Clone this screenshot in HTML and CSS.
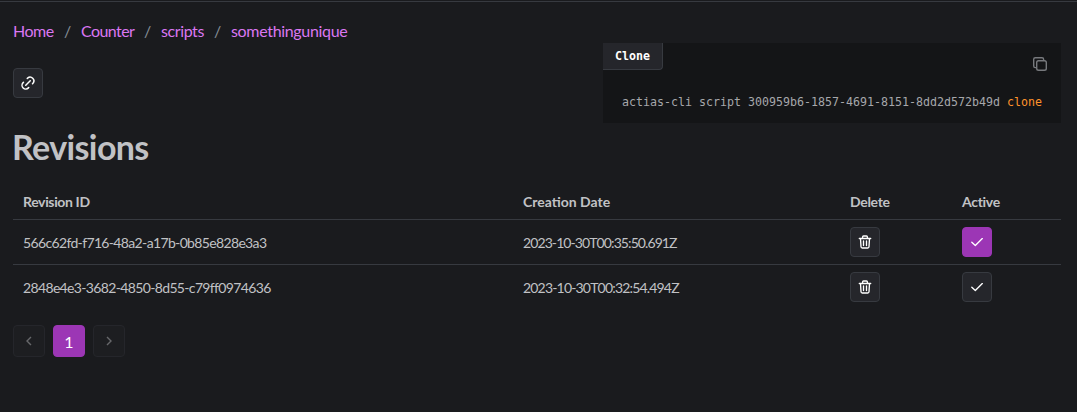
FILE: index.html
```html
<!DOCTYPE html>
<html lang="en">
<head>
<meta charset="utf-8">
<title>Revisions</title>
<link rel="stylesheet" href="styles.css">
</head>
<body>
<svg class="sprite" aria-hidden="true">
  <symbol id="trash" viewBox="0 0 16 16"><path d="M2.300 4.500h11.400M5.600 4.300V2.900Q5.600 2 6.500 2h3q.9 0 .9.900v1.400M3.500 4.500l.5 8.300q.1 1.200 1.200 1.200h5.600q1.100 0 1.200-1.200l.5-8.300M6.500 6.800v4.700M9.500 6.800v4.700"/></symbol>
  <symbol id="check" viewBox="0 0 16 16"><path d="M2.800 8.300 6.300 11.600 13.300 4.600"/></symbol>
</svg>
<main class="page">
  <header class="top">
    <div>
      <nav class="breadcrumbs">
        <a class="crumb-home">Home</a><span>/</span><a class="crumb-counter">Counter</a><span>/</span><a class="crumb-scripts">scripts</a><span>/</span><a class="crumb-name">somethingunique</a>
      </nav>
      <button class="action link-action" aria-label="Copy link">
        <svg viewBox="0 0 24 24"><path d="m9 15 6-6M11 6l.5-.55a5 5 0 0 1 7.050 7.050L18 13M13 18l-.4.530a5 5 0 0 1-7.100-7.050L6 11"/></svg>
      </button>
    </div>
    <section class="code">
      <div class="tab">Clone</div>
      <svg class="copy" viewBox="0 0 16 16"><rect x="4.700" y="4.700" width="9.600" height="9.600" rx="1.800"/><path d="M11.600 4.500V3.300q0-1.600-1.600-1.600H3.300Q1.700 1.700 1.700 3.300V10q0 1.600 1.600 1.600h1.200"/></svg>
      <pre>actias-cli script 300959b6-1857-4691-8151-8dd2d572b49d <b>clone</b></pre>
    </section>
  </header>
  <h1>Revisions</h1>
  <div class="table">
    <div class="row head"><span class="h-id">Revision ID</span><span class="h-date">Creation Date</span><span class="h-action">Delete</span><span class="h-action">Active</span></div>
    <div class="row">
      <span class="id">566c62fd-f716-48a2-a17b-0b85e828e3a3</span><span class="date date-tight">2023-10-30T00:35:50.691Z</span>
      <button class="action" aria-label="Delete"><svg><use href="#trash"/></svg></button>
      <button class="action filled" aria-label="Active"><svg><use href="#check"/></svg></button>
    </div>
    <div class="row">
      <span class="id">2848e4e3-3682-4850-8d55-c79ff0974636</span><span class="date">2023-10-30T00:32:54.494Z</span>
      <button class="action" aria-label="Delete"><svg><use href="#trash"/></svg></button>
      <button class="action" aria-label="Set active"><svg><use href="#check"/></svg></button>
    </div>
  </div>
  <nav class="pagination">
    <button class="pager" disabled aria-label="Previous"><svg viewBox="0 0 16 16"><path d="M10 4 6 8l4 4"/></svg></button>
    <button class="pager current" aria-label="Page 1">1</button>
    <button class="pager" disabled aria-label="Next"><svg viewBox="0 0 16 16"><path d="M6 4l4 4-4 4"/></svg></button>
  </nav>
</main>
</body>
</html>
```
FILE: styles.css
```css
* { box-sizing: border-box; }
body {
  margin: 0;
  padding-top: 1px;
  height: 412px;
  overflow: hidden;
  background: #1a1b1e;
  color: #c1c2c5;
  font: 14px/22px Lato, sans-serif;
}
.sprite { position: absolute; width: 0; height: 0; }
.page { border-top: 1px solid #373a40; padding: 18px 16px 0 13px; }
.top { display: flex; justify-content: space-between; height: 103px; }
.breadcrumbs { display: flex; height: 25px; font-size: 16px; line-height: 22px; white-space: nowrap; }
.breadcrumbs a { color: #da77f2; }
.breadcrumbs span { width: 27px; text-align: center; color: #868e96; }
.crumb-home { width: 41px; letter-spacing: -0.5px; }
.crumb-counter { width: 53px; letter-spacing: -0.57px; }
.crumb-scripts { width: 43px; letter-spacing: -0.4px; }
.crumb-name { width: 117px; letter-spacing: -0.33px; }
.action {
  display: flex;
  align-items: center;
  justify-content: center;
  width: 30px;
  height: 30px;
  padding: 0;
  border: 1px solid #373a40;
  border-radius: 4px;
  background: #25262b;
  color: #fff;
}
.link-action { margin-top: 23px; }
.action svg { width: 16px; height: 16px; fill: none; stroke: currentColor; stroke-width: 1.35; stroke-linecap: round; stroke-linejoin: round; }
.link-action svg { width: 18px; height: 18px; stroke-width: 2; }
.filled { background: #9c36b5; border-color: #9c36b5; }
.code { position: relative; width: 458px; height: 80px; margin-top: 23px; background: #141517; font-family: "DejaVu Sans Mono", monospace; font-size: 11.63px; }
.tab { width: 60px; height: 27px; padding-left: 12px; line-height: 26px; border: solid #373a40; border-width: 0 1px 1px 0; border-bottom-right-radius: 4px; background: #25262b; color: #fff; font-weight: 700; }
.copy { position: absolute; right: 13px; top: 13px; width: 16px; height: 16px; fill: none; stroke: #77797d; stroke-width: 1.4; }
.code pre { margin: 22px 0 0 19px; font: inherit; line-height: 20px; color: #a6a7ab; }
.code b { color: #ff922b; font-weight: 400; }
h1 { margin: 5px 0 0; height: 57px; font-size: 34px; line-height: 38px; font-weight: 700; letter-spacing: -0.62px; text-indent: -1px; }
.row { display: grid; grid-template-columns: 500px 327px 112px 1fr; align-items: center; height: 45px; padding-left: 10px; white-space: nowrap; border-bottom: 1px solid #373a40; }
.row:last-child { height: 44px; border: 0; }
.id, .date { padding-top: 2px; }
.id { letter-spacing: -0.65px; }
.date { letter-spacing: -0.82px; }
.date-tight { letter-spacing: -0.91px; }
.head { height: 35px; font-weight: 700; }
.h-id { letter-spacing: -0.36px; }
.h-action { letter-spacing: -0.3px; }
.pagination { display: flex; gap: 8px; margin-top: 16px; }
.pager { display: flex; align-items: center; justify-content: center; width: 32px; height: 32px; padding: 0; border: 1px solid #25262b; border-radius: 4px; background: #1d1e21; color: #67686b; font: 16px/30px Lato, sans-serif; }
.pager svg { width: 16px; height: 16px; fill: none; stroke: currentColor; stroke-width: 1.4; }
.current { padding-top: 2px; background: #9c36b5; border-color: #9c36b5; color: #fff; }
```
